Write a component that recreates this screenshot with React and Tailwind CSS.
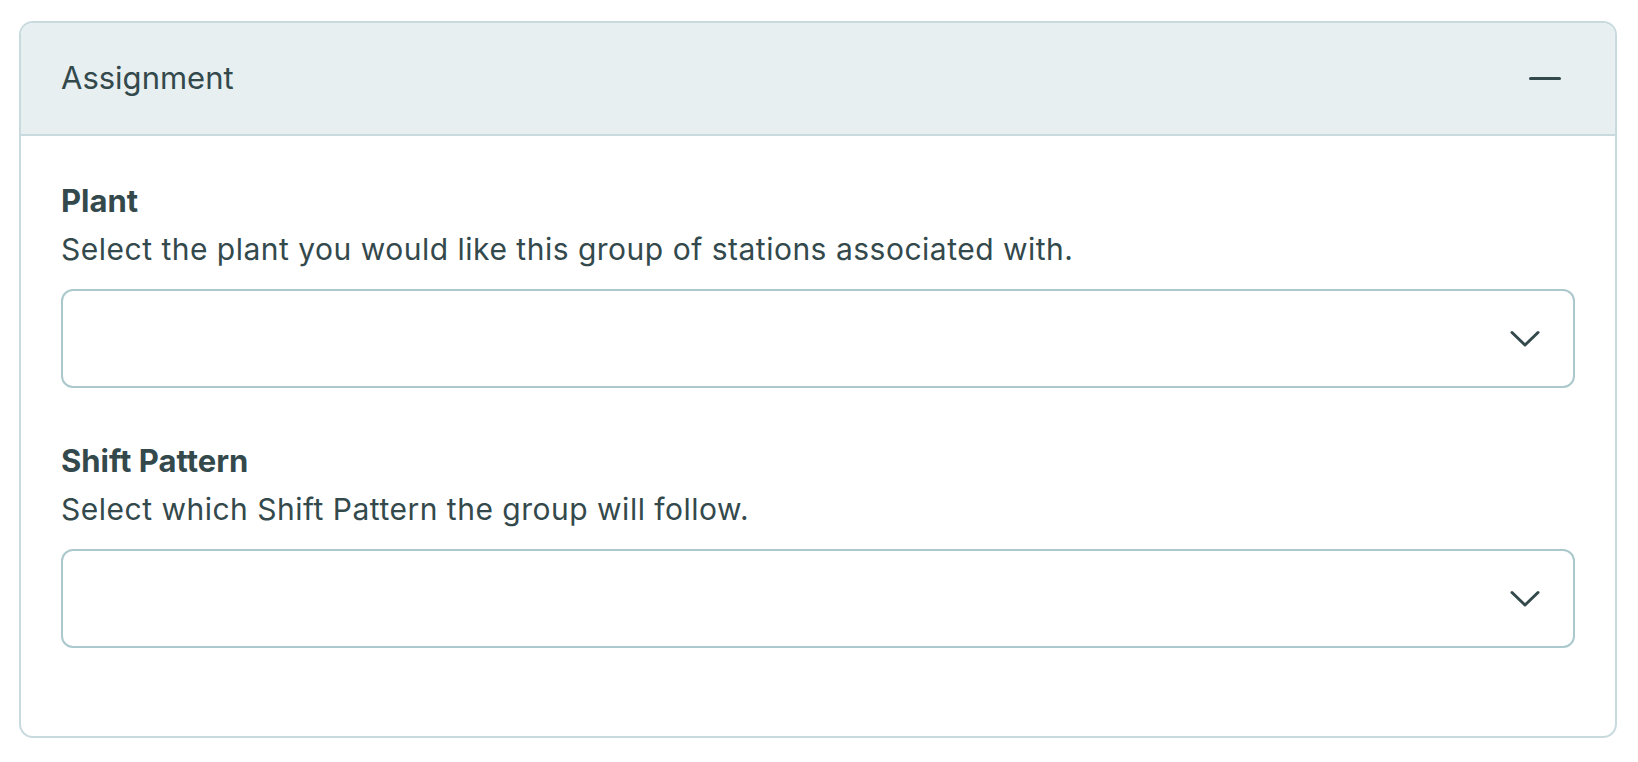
import { useState } from 'react';

const Chevron = () => (
  <svg width="30" height="18" viewBox="0 0 30 18" fill="none" className="shrink-0">
    <path d="M2 2.5 L15 15 L28 2.5" stroke="#33494c" strokeWidth="3" strokeLinecap="round" strokeLinejoin="round" />
  </svg>
);

const SelectField = ({ label, help, value, onChange }) => (
  <div className="flex flex-col">
    <label className="text-[31px] leading-[40px] font-bold text-[#33494c]">{label}</label>
    <p className="text-[30px] leading-[40px] tracking-[0.5px] text-[#33494c] mt-[8px]">{help}</p>
    <div className="relative mt-[20px]">
      <select
        value={value}
        onChange={(e) => onChange(e.target.value)}
        className="appearance-none w-full h-[99px] rounded-[12px] border-2 border-[#abc8cc] bg-white px-6 text-[28px] text-[#33494c] outline-none"
      >
        <option value=""></option>
      </select>
      <div className="pointer-events-none absolute right-[35px] top-1/2 -translate-y-1/2 flex">
        <Chevron />
      </div>
    </div>
  </div>
);

export default function App() {
  const [open, setOpen] = useState(true);
  const [plant, setPlant] = useState('');
  const [pattern, setPattern] = useState('');

  return (
    <div className="min-h-screen bg-white pt-[21px] pl-[19px]" style={{ fontFamily: 'Inter, "Noto Sans", sans-serif' }}>
      <div className="w-[1598px] border-2 border-[#c8dadd] rounded-[14px] overflow-hidden">
        <button
          onClick={() => setOpen(!open)}
          className="w-full h-[113px] bg-[#e7eff1] border-b-2 border-[#c8dadd] flex items-center justify-between pl-[40px] pr-[54px]"
        >
          <span className="text-[31px] text-[#33494c]">Assignment</span>
          <span className="block w-[32px] h-[3px] rounded-full bg-[#33494c]"></span>
        </button>
        {open && (
          <div className="px-[40px] pt-[45px] pb-[88px] flex flex-col gap-[53px]">
            <SelectField
              label="Plant"
              help="Select the plant you would like this group of stations associated with."
              value={plant}
              onChange={setPlant}
            />
            <SelectField
              label="Shift Pattern"
              help="Select which Shift Pattern the group will follow."
              value={pattern}
              onChange={setPattern}
            />
          </div>
        )}
      </div>
    </div>
  );
}
